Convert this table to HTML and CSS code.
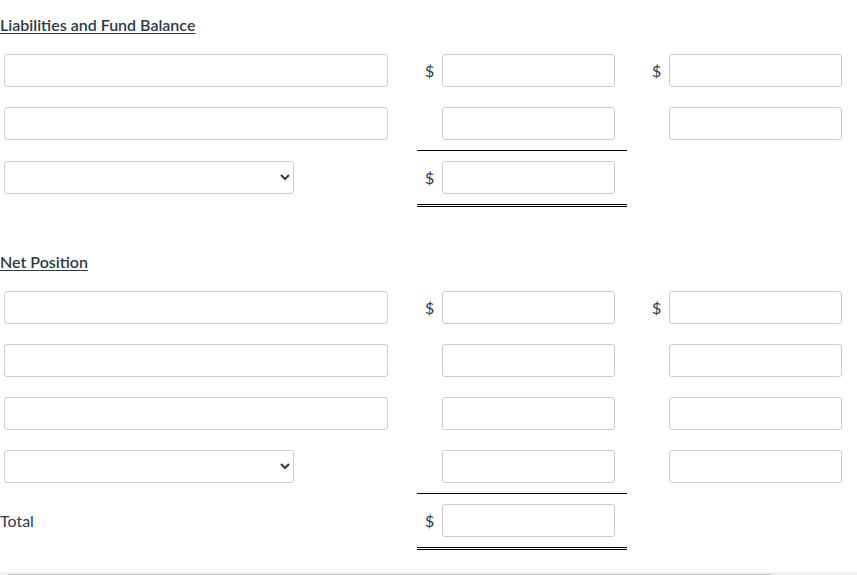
FILE: index.html
```html
<!DOCTYPE html>
<html>
<head>
<meta charset="utf-8">
<link rel="stylesheet" href="styles.css">
</head>
<body>
<div class="page">
  <section class="section first">
    <h3 class="heading">Liabilities and Fund Balance</h3>
    <div class="row">
      <div class="cell-label"><input class="field field-wide" type="text"></div>
      <div class="cell-amt"><span class="cur">$</span><input class="field" type="text"></div>
      <div class="cell-amt col3"><span class="cur">$</span><input class="field" type="text"></div>
    </div>
    <div class="row">
      <div class="cell-label"><input class="field field-wide" type="text"></div>
      <div class="cell-amt"><span class="cur"></span><input class="field" type="text"></div>
      <div class="cell-amt col3"><span class="cur"></span><input class="field" type="text"></div>
    </div>
    <div class="row row-total">
      <div class="cell-label"><select class="field field-select"><option></option></select></div>
      <div class="cell-amt line"><span class="cur">$</span><input class="field" type="text"></div>
      <div class="cell-amt col3"></div>
    </div>
  </section>

  <section class="section second">
    <h3 class="heading">Net Position</h3>
    <div class="row">
      <div class="cell-label"><input class="field field-wide" type="text"></div>
      <div class="cell-amt"><span class="cur">$</span><input class="field" type="text"></div>
      <div class="cell-amt col3"><span class="cur">$</span><input class="field" type="text"></div>
    </div>
    <div class="row">
      <div class="cell-label"><input class="field field-wide" type="text"></div>
      <div class="cell-amt"><span class="cur"></span><input class="field" type="text"></div>
      <div class="cell-amt col3"><span class="cur"></span><input class="field" type="text"></div>
    </div>
    <div class="row">
      <div class="cell-label"><input class="field field-wide" type="text"></div>
      <div class="cell-amt"><span class="cur"></span><input class="field" type="text"></div>
      <div class="cell-amt col3"><span class="cur"></span><input class="field" type="text"></div>
    </div>
    <div class="row">
      <div class="cell-label"><select class="field field-select"><option></option></select></div>
      <div class="cell-amt"><span class="cur"></span><input class="field" type="text"></div>
      <div class="cell-amt col3"><span class="cur"></span><input class="field" type="text"></div>
    </div>
    <div class="row row-total">
      <div class="cell-label total-label">Total</div>
      <div class="cell-amt line"><span class="cur">$</span><input class="field" type="text"></div>
      <div class="cell-amt col3"></div>
    </div>
  </section>

  <div class="scrollbar"><div class="thumb"></div></div>
</div>
</body>
</html>
```

FILE: styles.css
```css
html, body {
  margin: 0;
  padding: 0;
  background: #ffffff;
}

body {
  font-family: Lato, "Open Sans", "Liberation Sans", sans-serif;
  font-size: 16px;
  color: #2d3b45;
  overflow: hidden;
}

.page {
  width: 857px;
  height: 575px;
  overflow: hidden;
}

.section.first {
  padding-top: 15px;
}

.section.second {
  margin-top: 45px;
}

.heading {
  margin: 0 0 10px 0;
  font-size: 16px;
  line-height: 19px;
  font-weight: 600;
  text-decoration: underline;
  text-underline-offset: 2px;
  text-decoration-thickness: 1px;
  color: #2d3b45;
}

.row {
  display: flex;
  align-items: stretch;
}

.cell-label {
  width: 417px;
  box-sizing: border-box;
  padding: 10px 0 10px 4px;
  display: flex;
  align-items: center;
}

.cell-amt {
  width: 210px;
  box-sizing: border-box;
  padding: 10px 12px 10px 8px;
  display: flex;
  align-items: center;
}

.cell-amt.col3 {
  margin-left: 17px;
}

.cur {
  width: 17px;
  flex: none;
  font-size: 16px;
  line-height: 20px;
  color: #2d3b45;
}

.field {
  box-sizing: border-box;
  width: 173px;
  height: 33px;
  margin: 0;
  padding: 4px 6px;
  border: 1px solid #c7cdd1;
  border-radius: 3px;
  background: #ffffff;
  font-family: Lato, "Liberation Sans", sans-serif;
  font-size: 14px;
  color: #2d3b45;
  outline: none;
}

.field-wide {
  width: 384px;
}

.field-select {
  width: 290px;
}

.row-total > * {
  border-top: 1px solid transparent;
  border-bottom: 3px double transparent;
}

.row-total > .line {
  border-top-color: #000000;
  border-bottom-color: #000000;
}

.total-label {
  padding-left: 0;
  font-size: 16px;
  color: #2d3b45;
}

.scrollbar {
  margin-top: 22px;
  height: 12px;
  background: #f1f1f1;
  padding-top: 2px;
  box-sizing: border-box;
}

.thumb {
  margin-left: 8px;
  width: 763px;
  height: 8px;
  background: #c1c1c1;
}
```
